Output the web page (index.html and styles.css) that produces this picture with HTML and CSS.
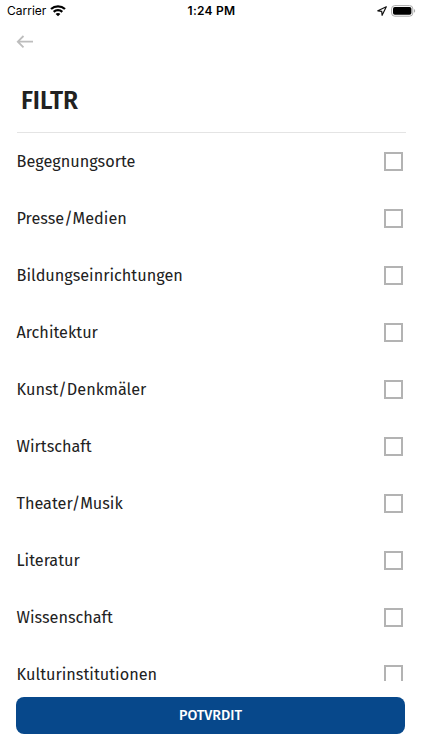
FILE: index.html
```
<!DOCTYPE html>
<html lang="de">
<head>
<meta charset="utf-8">
<meta name="viewport" content="width=device-width, initial-scale=1">
<title>Filtr</title>
<link rel="stylesheet" href="styles.css">
</head>
<body>
<div class="screen">
  <header class="status">
    <div class="carrier"><span>Carrier</span>
      <svg width="16" height="12" viewBox="0 0 16 12" fill="none" stroke="#000" stroke-width="2.3"><path d="M1 4C5 .4 11 .4 15 4M3.700 6.800c2.400-2.200 6.200-2.200 8.600 0"/><path d="M8 11.300 5.600 9c1.300-1.200 3.500-1.200 4.800 0z" fill="#000" stroke="none"/></svg>
    </div>
    <div class="time">1:24 PM</div>
    <div class="indicators">
      <svg width="10" height="10" viewBox="0 0 10 10" fill="none" stroke="#111" stroke-width="1.2" stroke-linejoin="round"><path d="M9.300 .8 .8 4.800l3.900.5.4 4z"/></svg>
      <svg width="25" height="12" viewBox="0 0 25 12"><rect x=".6" y=".6" width="21.2" height="10.6" rx="3.2" fill="#fff" stroke="#aaa"/><rect x="2" y="2" width="18.4" height="7.8" rx="1.8"/><path d="M23 4c1.6.5 1.6 3.300 0 3.800z" fill="#aaa"/></svg>
    </div>
  </header>
  <nav class="nav">
    <svg class="back" width="18" height="14" viewBox="0 0 18 14" fill="none" stroke="#bdbdbd" stroke-width="1.8"><path d="M17 6.700H2M7.500 1 1.800 6.700l5.700 5.700"/></svg>
  </nav>
  <h1 class="title">FILTR</h1>
  <main class="list">
    <label class="row"><span>Begegnungsorte</span><i class="box"></i></label>
    <label class="row"><span>Presse/Medien</span><i class="box"></i></label>
    <label class="row"><span>Bildungseinrichtungen</span><i class="box"></i></label>
    <label class="row"><span>Architektur</span><i class="box"></i></label>
    <label class="row"><span>Kunst/Denkmäler</span><i class="box"></i></label>
    <label class="row"><span>Wirtschaft</span><i class="box"></i></label>
    <label class="row"><span>Theater/Musik</span><i class="box"></i></label>
    <label class="row"><span>Literatur</span><i class="box"></i></label>
    <label class="row"><span>Wissenschaft</span><i class="box"></i></label>
    <label class="row"><span>Kulturinstitutionen</span><i class="box"></i></label>
  </main>
  <button class="confirm">POTVRDIT</button>
</div>
</body>
</html>
```
FILE: styles.css
```
* { box-sizing: border-box; }
body { margin: 0; background: #fff; color: #212121; font-family: "Fira Sans", "Noto Sans", sans-serif; }
.screen { width: 422px; height: 750px; overflow: hidden; display: flex; flex-direction: column; }
.status { height: 22px; padding: 0 6px 0 7px; display: grid; grid-template-columns: 1fr auto 1fr; align-items: center; font-family: Inter, sans-serif; font-size: 12px; color: #000; }
.carrier { display: flex; align-items: center; gap: 4px; }
.time { font-weight: 600; letter-spacing: .25px; }
.carrier span, .time { position: relative; top: -.5px; }
.indicators { display: flex; justify-content: flex-end; align-items: center; gap: 4px; }
.nav { height: 40px; padding: 13px 16px; }
.back { display: block; }
.title { margin: 0 16.5px; height: 71px; padding: 22px 4.5px 0; border-bottom: 1px solid #e4e4e4; font-size: 24.5px; line-height: 34px; font-weight: 600; letter-spacing: -.1px; }
.list { height: 548px; overflow: hidden; padding: 0 19.5px 0 16.5px; }
.row { height: 57px; display: flex; align-items: center; justify-content: space-between; font-size: 16.25px; line-height: 24px; }
.box { width: 19px; height: 19px; border: 2px solid #b3b3b3; }
.confirm { flex: none; margin: 16px 17px 0 16px; height: 36.5px; border: 0; border-radius: 8px; background: #07488b; color: #fff; font: 500 14.25px/20px "Fira Sans", "Noto Sans", sans-serif; padding: 1px 0 0; }
```
